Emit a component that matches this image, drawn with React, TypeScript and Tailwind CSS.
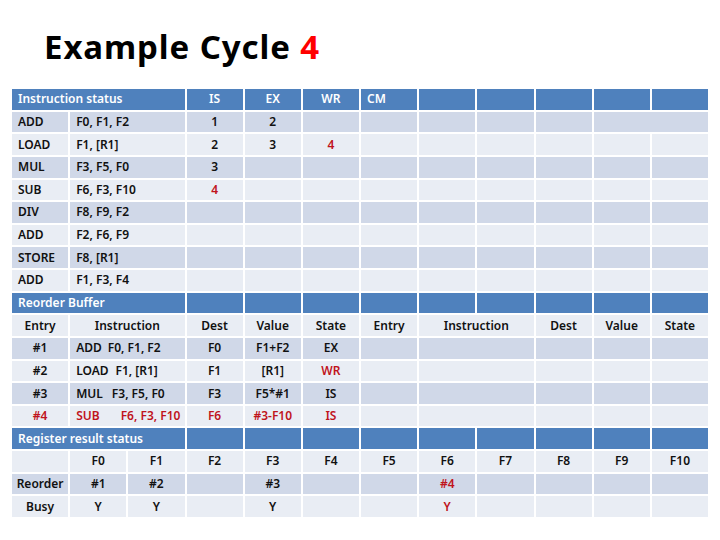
import React from "react";

type Tone = "h" | "d" | "l";

const toneCls: Record<Tone, string> = {
  h: "bg-[#4f81bd]",
  d: "bg-[#d0d8e8]",
  l: "bg-[#e9edf4]",
};

const spanCls: Record<number, string> = {
  1: "col-span-1",
  2: "col-span-2",
  3: "col-span-3",
};

function Cell({
  tone,
  span = 1,
  left = false,
  red = false,
  children,
}: {
  tone: Tone;
  span?: number;
  left?: boolean;
  red?: boolean;
  children?: React.ReactNode;
}) {
  const color = tone === "h" ? "text-white" : red ? "text-[#c0141c]" : "text-[#111111]";
  return (
    <div
      className={`${toneCls[tone]} ${spanCls[span]} ${color} flex items-center whitespace-pre ${
        left ? "justify-start pl-[6px]" : "justify-center"
      }`}
    >
      {children}
    </div>
  );
}

const instrs = [
  ["ADD", "F0, F1, F2", "1", "2", ""],
  ["LOAD", "F1, [R1]", "2", "3", "4"],
  ["MUL", "F3, F5, F0", "3", "", ""],
  ["SUB", "F6, F3, F10", "4", "", ""],
  ["DIV", "F8, F9, F2", "", "", ""],
  ["ADD", "F2, F6, F9", "", "", ""],
  ["STORE", "F8, [R1]", "", "", ""],
  ["ADD", "F1, F3, F4", "", "", ""],
];

const rob = [
  { e: "#1", op: "ADD", gap: "ml-[6px]", args: "F0, F1, F2", d: "F0", v: "F1+F2", s: "EX", red: false, sred: false },
  { e: "#2", op: "LOAD", gap: "ml-[7px]", args: "F1, [R1]", d: "F1", v: "[R1]", s: "WR", red: false, sred: true },
  { e: "#3", op: "MUL", gap: "ml-[9px]", args: "F3, F5, F0", d: "F3", v: "F5*#1", s: "IS", red: false, sred: false },
  { e: "#4", op: "SUB", gap: "ml-[21px]", args: "F6, F3, F10", d: "F6", v: "#3-F10", s: "IS", red: true, sred: true },
];

const regs = ["F0", "F1", "F2", "F3", "F4", "F5", "F6", "F7", "F8", "F9", "F10"];
const reorder = ["#1", "#2", "", "#3", "", "", "#4", "", "", "", ""];
const busy = ["Y", "Y", "", "Y", "", "", "Y", "", "", "", ""];

export default function App() {
  const blanks = (n: number, tone: Tone) =>
    Array.from({ length: n }).map((_, i) => <Cell key={`b${i}`} tone={tone} />);

  return (
    <div
      className="w-[720px] h-[540px] bg-white overflow-hidden"
      style={{ fontFamily: '"Noto Sans", "Noto Sans CJK KR", sans-serif' }}
    >
      <div className="pl-[44px] pt-[26px] h-[89px] text-[33px] leading-[42px] font-bold text-black tracking-[0.9px]">
        Example Cycle <span className="text-[#ff0000]">4</span>
      </div>

      <div className="ml-[12px] w-[696px] h-[428px] grid grid-cols-12 grid-rows-[repeat(19,minmax(0,1fr))] gap-[2px] text-[12px] leading-none font-semibold">
        {/* instruction status */}
        <Cell tone="h" span={3} left>Instruction status</Cell>
        <Cell tone="h">IS</Cell>
        <Cell tone="h">EX</Cell>
        <Cell tone="h">WR</Cell>
        <Cell tone="h" left>CM</Cell>
        {blanks(5, "h")}

        {instrs.map((r, i) => {
          const tone: Tone = i % 2 === 0 ? "d" : "l";
          return (
            <React.Fragment key={`i${i}`}>
              <Cell tone={tone} left>{r[0]}</Cell>
              <Cell tone={tone} span={2} left>{r[1]}</Cell>
              <Cell tone={tone} red={r[2] === "4"}>{r[2]}</Cell>
              <Cell tone={tone} red={r[3] === "4"}>{r[3]}</Cell>
              <Cell tone={tone} red={r[4] === "4"}>{r[4]}</Cell>
              <Cell tone={tone} />
              {i === 0 ? (
                <>
                  {blanks(3, tone)}
                  <Cell tone={tone} span={2} />
                </>
              ) : (
                blanks(5, tone)
              )}
            </React.Fragment>
          );
        })}

        {/* reorder buffer */}
        <Cell tone="h" span={3} left>Reorder Buffer</Cell>
        {blanks(9, "h")}

        <Cell tone="l">Entry</Cell>
        <Cell tone="l" span={2}>Instruction</Cell>
        <Cell tone="l">Dest</Cell>
        <Cell tone="l">Value</Cell>
        <Cell tone="l">State</Cell>
        <Cell tone="l">Entry</Cell>
        <Cell tone="l" span={2}>Instruction</Cell>
        <Cell tone="l">Dest</Cell>
        <Cell tone="l">Value</Cell>
        <Cell tone="l">State</Cell>

        {rob.map((r, i) => {
          const tone: Tone = i % 2 === 0 ? "d" : "l";
          return (
            <React.Fragment key={`r${i}`}>
              <Cell tone={tone} red={r.red}>{r.e}</Cell>
              <Cell tone={tone} span={2} left red={r.red}>
                <span>{r.op}</span>
                <span className={r.gap}>{r.args}</span>
              </Cell>
              <Cell tone={tone} red={r.red}>{r.d}</Cell>
              <Cell tone={tone} red={r.red}>{r.v}</Cell>
              <Cell tone={tone} red={r.sred}>{r.s}</Cell>
              <Cell tone={tone} />
              <Cell tone={tone} span={2} />
              {blanks(3, tone)}
            </React.Fragment>
          );
        })}

        {/* register result status */}
        <Cell tone="h" span={3} left>Register result status</Cell>
        {blanks(9, "h")}

        <Cell tone="l" />
        {regs.map((r) => (
          <Cell key={r} tone="l">{r}</Cell>
        ))}

        <Cell tone="d">Reorder</Cell>
        {reorder.map((r, i) => (
          <Cell key={`ro${i}`} tone="d" red={r === "#4"}>{r}</Cell>
        ))}

        <Cell tone="l">Busy</Cell>
        {busy.map((r, i) => (
          <Cell key={`bu${i}`} tone="l" red={i === 6}>{r}</Cell>
        ))}
      </div>
    </div>
  );
}
